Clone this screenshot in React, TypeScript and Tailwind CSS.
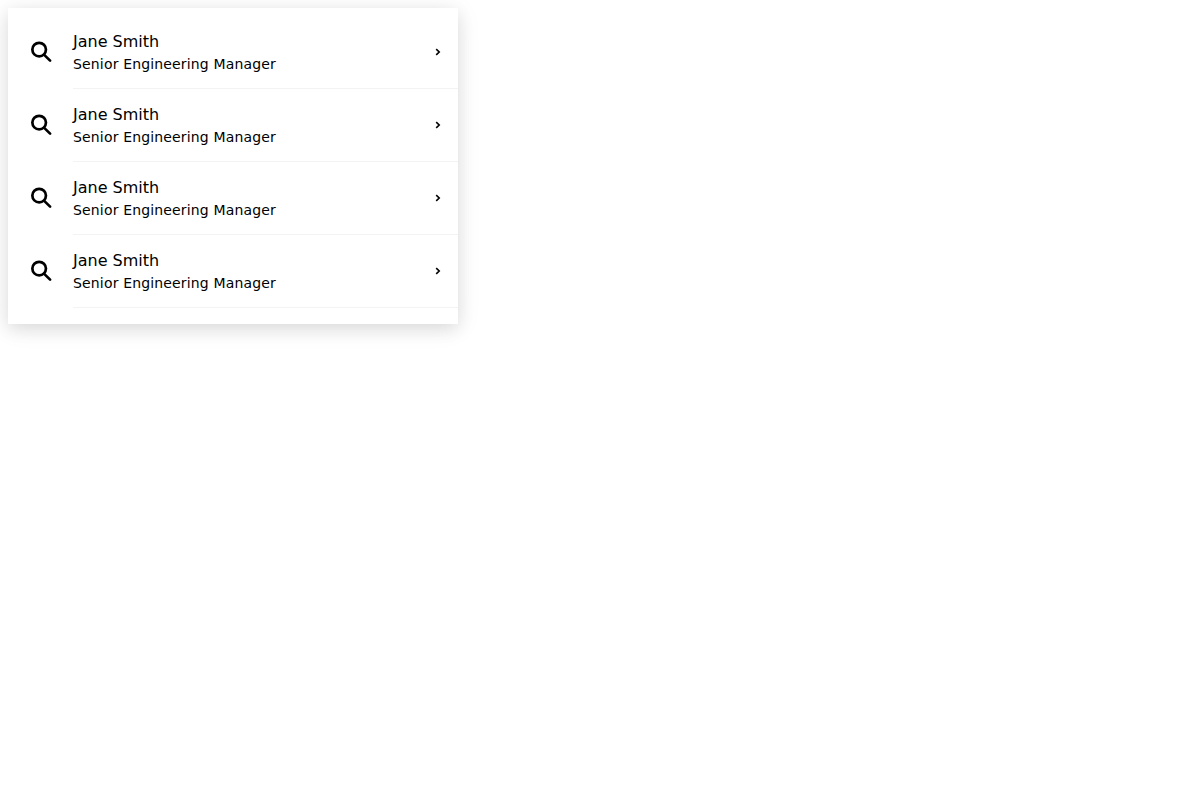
const people = [1, 2, 3, 4].map((id) => ({ id, name: "Jane Smith", role: "Senior Engineering Manager" }));

function SearchIcon() {
  return (
    <svg width="24" height="24" viewBox="0 0 24 24" fill="none" stroke="black" strokeLinecap="round">
      <circle cx="10.15" cy="9.6" r="6.8" strokeWidth="2.7" />
      <path d="M15.2 14.9 21.1 20.6" strokeWidth="2.7" />
    </svg>
  );
}

function ChevronIcon() {
  return (
    <svg width="8" height="8" viewBox="0 0 8 8" fill="none" stroke="black" strokeWidth="1.6">
      <path d="M2.2 1.2 5.2 4 2.2 6.8" />
    </svg>
  );
}

export default function App() {
  return (
    <main className="min-h-screen p-2 font-['DejaVu_Sans',sans-serif] text-black">
      <ul className="w-[450px] bg-white pt-2 pb-4 shadow-[0_4px_24px_rgba(0,0,0,0.08),0_5px_16px_rgba(0,0,0,0.09)]">
        {people.map((person) => (
          <li key={person.id} className="flex h-[73px]">
            <div className="flex w-[65px] items-center pb-px pl-[21px]">
              <SearchIcon />
            </div>
            <div className="flex flex-1 items-center justify-between border-b border-[#f3f3f3] pr-4">
              <div>
                <div className="text-base leading-6">{person.name}</div>
                <div className="text-sm leading-[21px] tracking-[0.16px]">{person.role}</div>
              </div>
              <ChevronIcon />
            </div>
          </li>
        ))}
      </ul>
    </main>
  );
}
